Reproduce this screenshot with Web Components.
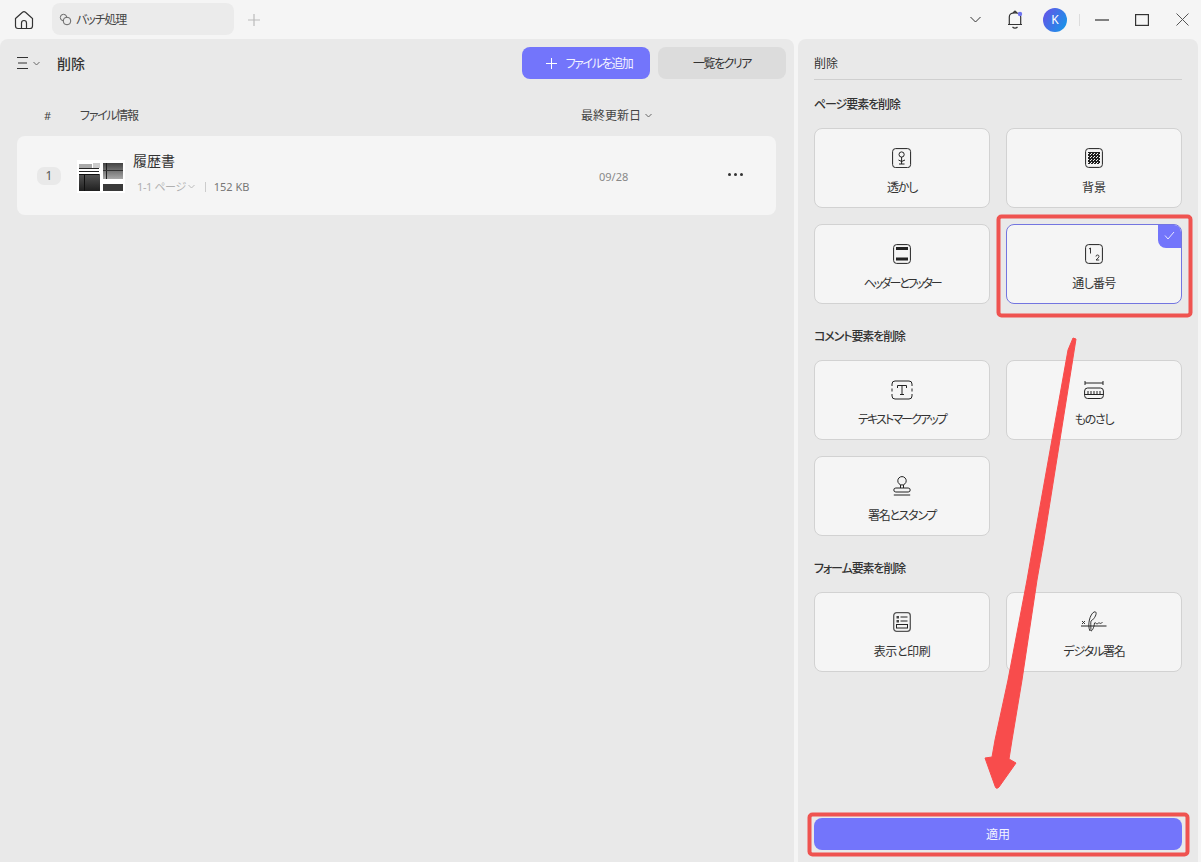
<!DOCTYPE html>
<html lang="ja">
<head>
<meta charset="utf-8">
<title>バッチ処理</title>
<style>
  html, body { margin: 0; height: 100%; }
  body {
    width: 1201px; height: 862px; overflow: hidden; position: relative;
    background: #f5f5f5; color: #333;
    font: 12px "Noto Sans", "Noto Sans CJK JP", sans-serif;
    font-feature-settings: "palt";
    display: flex; flex-direction: column;
  }
  .main { flex: 1; display: flex; gap: 4px; padding-right: 3px; min-height: 0; }
</style>
</head>
<body>
<app-titlebar></app-titlebar>
<div class="main">
  <file-panel></file-panel>
  <delete-panel></delete-panel>
</div>
<red-marks></red-marks>

<script>
// Custom Html Elements for the batch delete screen

class AppTitlebar extends HTMLElement {
  constructor() {
    super();
    this.attachShadow({ mode: "open" });
    this.shadowRoot.innerHTML = `
      <style>
        :host { display: flex; align-items: center; height: 39px; flex: none; position: relative; }
        svg { display: block; fill: none; stroke: #333; stroke-width: 1.2; }
        .home { margin-left: 14px; }
        .tab {
          margin-left: 18px; width: 182px; height: 32px; box-sizing: border-box;
          margin-top: -1px; background: #ebebeb; border-radius: 8px;
          display: flex; align-items: center; gap: 4px; padding-left: 7px;
          font-size: 12px; color: #444; letter-spacing: -1.1px;
        }
        .plus { margin-left: 14px; stroke: #bbb; }
        .right { margin-left: auto; display: flex; align-items: center; }
        .avatar {
          width: 24px; height: 24px; border-radius: 50%; color: #fff; font-size: 12px;
          background: linear-gradient(120deg, #6a50e8, #0f9be8);
          display: flex; align-items: center; justify-content: center;
        }
        .sep { width: 1px; height: 12px; background: #ddd; margin: 0 15px 0 12px; }
      </style>
      <svg class="home" width="20" height="20" viewBox="0 0 20 20">
        <path d="M1.5 8.5 L8.5 2.2 Q10 1 11.5 2.2 L18.5 8.5 V16 Q18.5 18.5 16 18.5 H4 Q1.5 18.5 1.5 16 Z"/>
        <path d="M7.5 18.5 V13 Q7.5 10.5 10 10.5 Q12.5 10.5 12.5 13 V18.5"/>
      </svg>
      <div class="tab">
        <svg width="13" height="13" viewBox="0 0 13 13" style="stroke:#666;stroke-width:1">
          <circle cx="4.5" cy="4.5" r="3.2"/><circle cx="8" cy="8" r="3.8" fill="#ebebeb"/>
        </svg>
        <span>バッチ処理</span>
      </div>
      <svg class="plus" width="12" height="12" viewBox="0 0 12 12"><path d="M6 0 V12 M0 6 H12"/></svg>
      <div class="right">
        <svg width="11" height="7" viewBox="0 0 11 7" style="stroke-width:1;margin-right:26px"><path d="M.5 1 L5.5 6 L10.5 1"/></svg>
        <svg width="16" height="20" viewBox="0 0 16 20" style="margin-right:20px">
          <path d="M1 14.5 H15 M2.3 14.5 V7 Q2.3 2.8 8 2.8 Q13.7 2.8 13.7 7 V14.5 M6.5 2.8 Q8 -.4 9.5 2.8 M5.5 17 Q8 19.5 10.5 17"/>
          <circle cx="13" cy="4" r="2.2" fill="#6f74f0" stroke="none"/>
        </svg>
        <div class="avatar">K</div>
        <div class="sep"></div>
        <svg width="14" height="2" viewBox="0 0 14 2" style="stroke-width:1.2;margin-right:26px"><path d="M0 1 H14"/></svg>
        <svg width="14" height="12" viewBox="0 0 14 12" style="margin-right:27px"><rect x=".6" y=".6" width="12.8" height="10.8"/></svg>
        <svg width="13" height="13" viewBox="0 0 13 13" style="stroke:#555;stroke-width:1;margin-right:12px"><path d="M.5 .5 L12.5 12.5 M12.5 .5 L.5 12.5"/></svg>
      </div>
    `;
  }
}

class FileRow extends HTMLElement {
  constructor() {
    super();
    this.attachShadow({ mode: "open" });
    this.shadowRoot.innerHTML = `
      <style>
        :host {
          display: flex; align-items: center; height: 79px; background: #f5f5f5;
          border-radius: 8px; margin: 0 18px 0 17px; position: relative; flex: none;
        }
        .num {
          width: 24px; height: 18px; margin-left: 20px; border-radius: 7px; background: #e9e9e9;
          font-size: 12px; text-align: center; line-height: 18px; color: #555;
        }
        .thumb { margin-left: 16px; margin-top: 1px; flex: none; display: block; }
        .info { margin-left: 8px; width: 466px; flex: none; }
        .name { font-size: 14px; color: #333; line-height: 20px; margin-top: -6px; }
        .meta { display: flex; align-items: center; font-size: 11px; color: #b0b0b0; margin-top: 8px; padding-left: 4px; line-height: 16px; letter-spacing: -.4px; }
        .meta i { width: 1px; height: 10px; background: #ccc; margin: 0 8px 0 10px; }
        .meta b { font-weight: 400; color: #777; letter-spacing: 0; }
        .date { font-size: 11px; color: #888; width: 129px; flex: none; margin-top: 1px; }
        .more { display: flex; gap: 3px; margin-top: -2px; }
        .more span { width: 3px; height: 3px; border-radius: 50%; background: #333; }
        svg.chev { margin-left: 2px; }
      </style>
      <div class="num">1</div>
      <svg class="thumb" width="48" height="33" viewBox="0 0 48 33" shape-rendering="crispEdges">
        <defs>
          <linearGradient id="g1" x1="0" y1="0" x2="0" y2="1"><stop offset="0" stop-color="#555"/><stop offset="1" stop-color="#1f1f1f"/></linearGradient>
          <linearGradient id="g2" x1="0" y1="0" x2="0" y2="1"><stop offset="0" stop-color="#444"/><stop offset="1" stop-color="#a8a8a8"/></linearGradient>
        </defs>
        <rect width="48" height="33" fill="#fff"/>
        <rect x="2" y="14" width="21" height="17" fill="url(#g1)"/>
        <rect x="2" y="4" width="13" height="4" fill="#aaa"/>
        <rect x="2" y="8" width="20" height="6" fill="#fff"/>
        <rect x="2" y="8" width="20" height="1" fill="#222"/>
        <rect x="2" y="11" width="20" height="1" fill="#222"/>
        <rect x="2" y="14" width="20" height="1" fill="#111"/>
        <rect x="16" y="3" width="7" height="5" fill="#ccc"/>
        <rect x="7" y="15" width="1" height="16" fill="#111"/>
        <rect x="26" y="3" width="20" height="16" fill="url(#g2)"/>
        <rect x="29" y="3" width="1" height="16" fill="#222"/>
        <rect x="26" y="10" width="20" height="1" fill="#333"/>
        <rect x="26" y="19" width="20" height="5" fill="#fff"/>
        <rect x="26" y="24" width="20" height="7" fill="#3a3a3a"/>
      </svg>
      <div class="info">
        <div class="name">履歴書</div>
        <div class="meta">1-1 ページ
          <svg class="chev" width="7" height="5" viewBox="0 0 7 5" fill="none" stroke="#bbb"><path d="M.5 1 L3.5 4 L6.5 1"/></svg>
          <i></i><b>152 KB</b>
        </div>
      </div>
      <div class="date">09/28</div>
      <div class="more"><span></span><span></span><span></span></div>
    `;
  }
}

class FilePanel extends HTMLElement {
  constructor() {
    super();
    this.attachShadow({ mode: "open" });
    this.shadowRoot.innerHTML = `
      <style>
        :host {
          display: flex; flex-direction: column; width: 794px; flex: none;
          background: #e9e9e9; border-radius: 8px 8px 0 0;
        }
        .head { display: flex; align-items: center; height: 32px; margin-top: 8px; padding: 0 8px 0 17px; }
        .title { font-size: 14px; font-weight: 500; color: #333; margin-left: 17px; }
        svg { display: block; fill: none; }
        .btn {
          height: 32px; border-radius: 8px; display: flex; align-items: center; justify-content: center;
          font-size: 12px; box-sizing: border-box;
        }
        .add { width: 128px; background: #7375fb; color: #f4f4ff; margin-left: auto; gap: 9px; padding-left: 6px; letter-spacing: -1.4px; }
        .clear { width: 128px; background: #dcdcdc; color: #333; margin-left: 8px; letter-spacing: -1.5px; }
        .cols { display: flex; align-items: center; height: 20px; margin-top: 26px; margin-bottom: 11px; font-size: 12px; color: #444; }
        .hash { margin-left: 44px; width: 36px; font-size: 11px; }
        .info { width: 501px; letter-spacing: -1.3px; }
        .sort { display: flex; align-items: center; gap: 4px; }
      </style>
      <div class="head">
        <svg width="11" height="12" viewBox="0 0 11 12" stroke="#333"><path d="M0 .5 H11 M1 6 H10 M0 11.5 H11"/></svg>
        <svg width="7" height="5" viewBox="0 0 7 5" stroke="#666" style="margin-left:5px"><path d="M.5 1 L3.5 4 L6.5 1"/></svg>
        <div class="title">削除</div>
        <div class="btn add">
          <svg width="11" height="11" viewBox="0 0 11 11" stroke="#fff"><path d="M5.5 0 V11 M0 5.5 H11"/></svg>
          <span>ファイルを追加</span>
        </div>
        <div class="btn clear">一覧をクリア</div>
      </div>
      <div class="cols">
        <div class="hash">#</div>
        <div class="info">ファイル情報</div>
        <div class="sort">最終更新日
          <svg width="7" height="5" viewBox="0 0 7 5" stroke="#666"><path d="M.5 1 L3.5 4 L6.5 1"/></svg>
        </div>
      </div>
      <file-row></file-row>
    `;
  }
}

// icons for the option cards, picked by the "icon" attribute
const CARD_ICONS = {
  watermark: `<svg width="20" height="20" viewBox="0 0 20 20"><rect x=".6" y=".6" width="18" height="19" rx="3"/><circle cx="9.6" cy="6.5" r="2.6"/><path d="M9.6 9 V16 M9.6 13.5 L13 12 M9.6 13.5 L6.5 12 M7 16 H12.5"/></svg>`,
  background: `<svg width="18" height="20" viewBox="0 0 18 20"><defs><pattern id="chk" width="3" height="3" patternUnits="userSpaceOnUse"><rect width="1.5" height="1.5" fill="#222"/><rect x="1.5" y="1.5" width="1.5" height="1.5" fill="#222"/></pattern></defs><rect x=".6" y=".6" width="16.8" height="18.8" rx="3"/><rect x="3" y="4" width="12" height="12" fill="url(#chk)" stroke="none"/></svg>`,
  header: `<svg width="18" height="20" viewBox="0 0 18 20"><rect x=".6" y=".6" width="16.8" height="18.8" rx="3"/><rect x="3" y="3" width="12" height="3" fill="#222" stroke="none"/><rect x="3" y="13.5" width="12" height="3" fill="#222" stroke="none"/></svg>`,
  numbers: `<svg width="18" height="20" viewBox="0 0 18 20"><rect x=".6" y=".6" width="16.8" height="18.8" rx="3"/><path d="M4 5 L5.5 4 V9.5 M11 12.5 Q11 11 12.5 11 Q14 11 14 12.5 Q14 13.5 11 16 H14.2" stroke-width=".9"/></svg>`,
  text: `<svg width="22" height="20" viewBox="0 0 22 20"><path d="M1 6 V4 Q1 1 4 1 H18 Q21 1 21 4 V6 M21 8.5 V11.5 M21 14 V16 Q21 19 18 19 H4 Q1 19 1 16 V14 M1 8.5 V11.5"/><path d="M6.5 8 V5.5 H15.5 V8 M11 5.5 V14.5 M9 14.5 H13"/></svg>`,
  ruler: `<svg width="20" height="20" viewBox="0 0 20 20"><path d="M1 1 V5 M19 1 V5 M1 3 H19"/><rect x=".6" y="8" width="18.8" height="10.5" rx="3"/><path d="M.6 14.5 H19.4 M4 11 V14.5 M7 11 V14.5 M10 11 V14.5 M13 11 V14.5 M16 11 V14.5"/></svg>`,
  stamp: `<svg width="18" height="20" viewBox="0 0 18 20"><circle cx="9" cy="4.8" r="4.2"/><path d="M7.5 9 V12 M10.5 9 V12"/><rect x=".8" y="12" width="16.4" height="4" rx="2"/><path d="M.8 19 H17.2"/></svg>`,
  form: `<svg width="18" height="20" viewBox="0 0 18 20"><rect x=".7" y=".7" width="16.6" height="18.6" rx="3" stroke="#555" stroke-width="1.3"/><rect x="3.5" y="4" width="2.5" height="2.5" fill="#444" stroke="none"/><rect x="3.5" y="8" width="2.5" height="2.5" fill="#444" stroke="none"/><path d="M7.5 5 H14.5 M7.5 9 H14.5"/><rect x="3.5" y="12.5" width="11" height="3.5"/></svg>`,
  signature: `<svg width="26" height="22" viewBox="0 0 26 22"><path d="M1 10 L4 13 M4 10 L1 13" stroke-width=".9"/><path d="M0 15 H25.5"/><path d="M9 20 C6 14 9 3 13 1 C17 -.5 15 7 10 10 C9.5 10.8 10 20 10 20 C11 20 13 17 13.5 12 C15 11 15 13 16 13 C17 13 17.5 11 18.5 12 C19.5 13 20 12 21.5 11.5" stroke-width=".9"/></svg>`,
};

class OptionCard extends HTMLElement {
  constructor() {
    super();
    this.attachShadow({ mode: "open" });
    this.shadowRoot.innerHTML = `
      <style>
        :host {
          display: flex; flex-direction: column; align-items: center; box-sizing: border-box;
          height: 80px; background: #f5f5f5; border: 1px solid #d2d2d2; border-radius: 8px;
          position: relative; font-size: 12px; color: #333; overflow: hidden;
        }
        :host([selected]) { border-color: #7375e0; }
        .icon { height: 24px; margin-top: 17px; display: flex; align-items: center; justify-content: center; }
        .icon svg { display: block; fill: none; stroke: #222; stroke-width: 1; }
        .label { margin-top: 9px; line-height: 18px; }
        .check {
          display: none; position: absolute; top: -1px; right: -1px; width: 24px; height: 24px;
          background: #7375fb; border-radius: 0 8px 0 8px;
        }
        :host([selected]) .check { display: block; }
        .check svg { display: block; margin: 7px 0 0 6px; }
      </style>
      <div class="icon"></div>
      <div class="label"><slot></slot></div>
      <div class="check"><svg width="11" height="9" viewBox="0 0 11 9" fill="none" stroke="#e8e8ff"><path d="M1 4.5 L4 8 L10 1"/></svg></div>
    `;
  }

  connectedCallback() {
    this.shadowRoot.querySelector(".icon").innerHTML = CARD_ICONS[this.getAttribute("icon")] || "";
  }
}

class OptionGroup extends HTMLElement {
  constructor() {
    super();
    this.attachShadow({ mode: "open" });
    this.shadowRoot.innerHTML = `
      <style>
        :host { display: block; margin-top: 23px; }
        :host([first]) { margin-top: 15px; }
        h3 { margin: 0; height: 18px; line-height: 20px; font-size: 12px; font-weight: 500; color: #333; letter-spacing: -1.1px; }
        .grid { display: grid; grid-template-columns: 176px 176px; gap: 16px; margin-top: 15px; letter-spacing: 0; }
      </style>
      <h3 id="title"></h3>
      <div class="grid"><slot></slot></div>
    `;
  }

  connectedCallback() {
    this.shadowRoot.querySelector("#title").textContent = this.getAttribute("title");
  }
}

class DeletePanel extends HTMLElement {
  constructor() {
    super();
    this.attachShadow({ mode: "open" });
    this.shadowRoot.innerHTML = `
      <style>
        :host {
          display: flex; flex-direction: column; flex: 1; box-sizing: border-box;
          background: #e9e9e9; border-radius: 8px 8px 0 0; padding: 0 16px 12px; margin-left: 0;
        }
        .head { height: 41px; box-sizing: border-box; border-bottom: 1px solid #cfcfcf; line-height: 49px; font-size: 12px; color: #333; flex: none; }
        .apply {
          margin-top: auto; height: 32px; border-radius: 8px; background: #7375fb; color: #f4f4ff;
          display: flex; align-items: center; justify-content: center; font-size: 12px; flex: none;
        }
      </style>
      <div class="head">削除</div>
      <option-group first title="ページ要素を削除">
        <option-card icon="watermark" style="letter-spacing:-1.3px">透かし</option-card>
        <option-card icon="background">背景</option-card>
        <option-card icon="header" style="letter-spacing:-2.2px">ヘッダーとフッター</option-card>
        <option-card icon="numbers" style="letter-spacing:-.7px" selected>通し番号</option-card>
      </option-group>
      <option-group title="コメント要素を削除">
        <option-card icon="text" style="letter-spacing:-1.9px">テキストマークアップ</option-card>
        <option-card icon="ruler" style="letter-spacing:-1.2px">ものさし</option-card>
        <option-card icon="stamp" style="letter-spacing:-1.3px">署名とスタンプ</option-card>
      </option-group>
      <option-group title="フォーム要素を削除">
        <option-card icon="form" style="letter-spacing:-.4px">表示と印刷</option-card>
        <option-card icon="signature" style="letter-spacing:-1.2px">デジタル署名</option-card>
      </option-group>
      <div class="apply">適用</div>
    `;
  }
}

// The red annotation boxes and the arrow lie over the screenshot
class RedMarks extends HTMLElement {
  constructor() {
    super();
    this.attachShadow({ mode: "open" });
    this.shadowRoot.innerHTML = `
      <style>
        :host { position: absolute; inset: 0; pointer-events: none; display: block; }
        svg { position: absolute; left: 0; top: 0; }
      </style>
      <svg width="1201" height="862" viewBox="0 0 1201 862" fill="none">
        <rect x="998.5" y="216.5" width="192" height="99" rx="3" stroke="#ef5350" stroke-width="4"/>
        <rect x="809.5" y="814.5" width="378" height="40" rx="3" stroke="#ef5350" stroke-width="4"/>
        <path d="M1073 338 L1076 339 L1044 540 L1037 580 L1022 680 L1012 740 L1009 759 L1016 763 L999 787 Q996 790 995 786 L985 758 L992 757 L995 740 L1008 680 L1027 580 L1034 540 L1068 350 Z" fill="#f84c4c" stroke="#f84c4c" stroke-width="1" stroke-linejoin="round"/>
      </svg>
    `;
  }
}

customElements.define("app-titlebar", AppTitlebar);
customElements.define("file-row", FileRow);
customElements.define("file-panel", FilePanel);
customElements.define("option-card", OptionCard);
customElements.define("option-group", OptionGroup);
customElements.define("delete-panel", DeletePanel);
customElements.define("red-marks", RedMarks);
</script>
</body>
</html>
